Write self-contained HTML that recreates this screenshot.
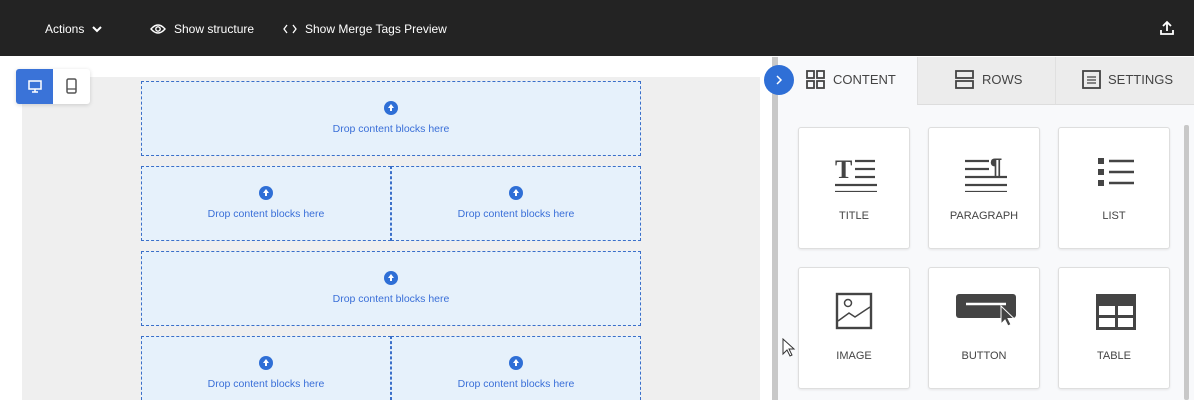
<!DOCTYPE html><html style="overflow:hidden;height:400px"><head><style>
body{margin:0;width:1194px;height:400px;overflow:hidden;background:#fff;font-family:"Liberation Sans",sans-serif;position:relative}
.a{position:absolute}
.top{left:0;top:0;width:1194px;height:56px;background:#232323;color:#fff;font-size:12px}
.dz{position:absolute;border:1px dashed #3a6fc9;background:#e6f1fb;box-sizing:border-box;color:#3a6fd8;font-size:10.5px;text-align:center}
.dz .c{width:14px;height:14px;border-radius:50%;background:#2f6fd6;margin:19px auto 8px;position:relative}
.dz .c:after{content:"";position:absolute;left:4px;top:3px;border-left:3px solid transparent;border-right:3px solid transparent;border-bottom:4px solid #fff}
.dz .c:before{content:"";position:absolute;left:6px;top:6px;width:2px;height:4px;background:#fff}
.card{position:absolute;width:112px;height:122px;background:#fff;border:1px solid #dedede;border-radius:3px;box-sizing:border-box;box-shadow:0 1px 2px rgba(0,0,0,.08);font-size:11px;color:#444;text-align:center}
.card svg{position:absolute;left:36px;top:24px}
.card span{position:absolute;left:0;right:0;top:82px}
.tab{position:absolute;top:57px;height:48px;font-size:13px;color:#444;line-height:46px;box-sizing:border-box}
</style></head><body>
<div class="a top">
<span class="a" style="left:45px;top:22px">Actions</span>
<svg class="a" style="left:92px;top:25px" width="10" height="8"><path d="M1 2l4 4 4-4" stroke="#fff" stroke-width="2" fill="none"/></svg>
<svg class="a" style="left:150px;top:23px" width="16" height="12"><path d="M1 6Q8-2 15 6Q8 14 1 6z" stroke="#fff" stroke-width="1.4" fill="none"/><circle cx="8" cy="6" r="2.2" stroke="#fff" stroke-width="1.4" fill="none"/></svg>
<span class="a" style="left:174px;top:22px">Show structure</span>
<svg class="a" style="left:283px;top:24px" width="14" height="10"><path d="M4 1L1 5l3 4M10 1l3 4-3 4" stroke="#fff" stroke-width="1.3" fill="none"/></svg>
<span class="a" style="left:305px;top:22px">Show Merge Tags Preview</span>
<svg class="a" style="left:1159px;top:20px" width="16" height="16"><path d="M8 11V2M4 6l4-4 4 4M2 10v4h12v-4" stroke="#fff" stroke-width="1.8" fill="none"/></svg>
</div>
<div class="a" style="left:22px;top:77px;width:738px;height:323px;background:#efefef"></div>
<div class="a" style="left:16px;top:69px;width:74px;height:35px;background:#fff;border-radius:3px;box-shadow:0 1px 4px rgba(0,0,0,.15)"></div>
<div class="a" style="left:16px;top:69px;width:37px;height:35px;background:#3a73d8;border-radius:3px 0 0 3px"></div>
<svg class="a" style="left:28px;top:80px" width="14" height="13"><rect x="1" y="1" width="12" height="8" stroke="#fff" stroke-width="1.5" fill="none"/><path d="M7 9v3M4 12h6" stroke="#fff" stroke-width="1.5"/></svg>
<svg class="a" style="left:66px;top:78px" width="11" height="16"><rect x="1" y="1" width="9" height="14" rx="1.5" stroke="#555" stroke-width="1.5" fill="none"/><path d="M1 11h9" stroke="#555" stroke-width="1.3"/></svg>
<div class="dz" style="left:141px;top:81px;width:500px;height:75px"><div class="c"></div>Drop content blocks here</div>
<div class="dz" style="left:141px;top:166px;width:250px;height:75px"><div class="c"></div>Drop content blocks here</div>
<div class="dz" style="left:391px;top:166px;width:250px;height:75px"><div class="c"></div>Drop content blocks here</div>
<div class="dz" style="left:141px;top:251px;width:500px;height:75px"><div class="c"></div>Drop content blocks here</div>
<div class="dz" style="left:141px;top:336px;width:250px;height:64px;border-bottom:none"><div class="c"></div>Drop content blocks here</div>
<div class="dz" style="left:391px;top:336px;width:250px;height:64px;border-bottom:none"><div class="c"></div>Drop content blocks here</div>
<div class="a" style="left:772px;top:57px;width:6px;height:343px;background:#c8c8c8"></div>
<div class="a" style="left:778px;top:57px;width:416px;height:343px;background:#f8f9fb"></div>
<div class="tab" style="left:778px;width:139px;padding-left:27px"><svg class="a" style="left:28px;top:13px" width="19" height="19"><g stroke="#444" stroke-width="1.8" fill="none"><rect x="1" y="1" width="7" height="7"/><rect x="11" y="1" width="7" height="7"/><rect x="1" y="11" width="7" height="7"/><rect x="11" y="11" width="7" height="7"/></g></svg><span style="margin-left:28px">CONTENT</span></div>
<div class="tab" style="left:917px;width:138px;background:#ececec;border-bottom:1px solid #ddd;border-left:1px solid #e0e0e0"><svg class="a" style="left:37px;top:13px" width="19" height="19"><g stroke="#444" stroke-width="1.8" fill="none"><rect x="1" y="1" width="17" height="7"/><rect x="1" y="11" width="17" height="7"/></g></svg><span style="margin-left:64px">ROWS</span></div>
<div class="tab" style="left:1055px;width:139px;background:#ececec;border-bottom:1px solid #ddd;border-left:1px solid #e0e0e0"><svg class="a" style="left:26px;top:13px" width="19" height="19"><g stroke="#444" stroke-width="1.8" fill="none"><rect x="1" y="1" width="17" height="17"/><path d="M5 7h9M5 10h9M5 13h9" stroke-width="1.2"/></g></svg><span style="margin-left:52px">SETTINGS</span></div>
<div class="a" style="left:764px;top:65px;width:30px;height:30px;border-radius:50%;background:#2f6fd6"></div>
<svg class="a" style="left:775px;top:75px" width="8" height="10"><path d="M2 1l4 4-4 4" stroke="#fff" stroke-width="1.5" fill="none"/></svg>
<div class="a" style="left:1184px;top:125px;width:5px;height:275px;background:#c8c8c8;border-radius:2px"></div>
<div class="card" style="left:798px;top:127px"><svg width="42" height="40"><text x="0" y="26" font-family="Liberation Serif" font-weight="bold" font-size="26" fill="#444">T</text><path d="M20 9h20M20 17h20M20 25h20M0 33h42M0 40h42" stroke="#444" stroke-width="2.2"/></svg><span>TITLE</span></div>
<div class="card" style="left:928px;top:127px"><svg width="42" height="40"><path d="M0 9h24M0 17h24M0 25h42M0 33h42M0 40h42" stroke="#444" stroke-width="2.2"/><text x="25" y="22" font-size="22" font-weight="bold" fill="#444">¶</text></svg><span>PARAGRAPH</span></div>
<div class="card" style="left:1058px;top:127px"><svg width="42" height="40"><g fill="#444"><rect x="3" y="6" width="6" height="6"/><rect x="3" y="17" width="6" height="6"/><rect x="3" y="28" width="6" height="6"/></g><path d="M14 9h25M14 20h25M14 31h25" stroke="#444" stroke-width="2.5"/></svg><span>LIST</span></div>
<div class="card" style="left:798px;top:267px"><svg width="42" height="40"><rect x="2" y="2" width="34" height="34" stroke="#444" stroke-width="2.4" fill="none"/><circle cx="13" cy="11" r="3.5" stroke="#444" stroke-width="1.5" fill="none"/><path d="M3 29l11-8 6 4 15-10" stroke="#444" stroke-width="1.5" fill="none"/></svg><span>IMAGE</span></div>
<div class="card" style="left:928px;top:267px"><svg class="a" style="left:25px;top:24px" width="64" height="40"><rect x="2" y="2" width="60" height="24" rx="3" fill="#444"/><path d="M12 12h40" stroke="#fff" stroke-width="2.5"/><path d="M47 14v18l4-4 3 6 3-1.5-3-6h6z" fill="#444" stroke="#fff" stroke-width="1"/></svg><span>BUTTON</span></div>
<div class="card" style="left:1058px;top:267px"><svg width="42" height="40"><rect x="1" y="2" width="40" height="36" fill="#444"/><g fill="#fff"><rect x="4" y="14" width="16" height="9"/><rect x="23" y="14" width="15" height="9"/><rect x="4" y="26" width="16" height="9"/><rect x="23" y="26" width="15" height="9"/></g></svg><span>TABLE</span></div>
<svg class="a" style="left:782px;top:338px" width="14" height="20"><path d="M1 1v15l4-4 3 6 2-1-3-6h5z" fill="#fff" stroke="#333" stroke-width="1"/></svg>
</body></html>
